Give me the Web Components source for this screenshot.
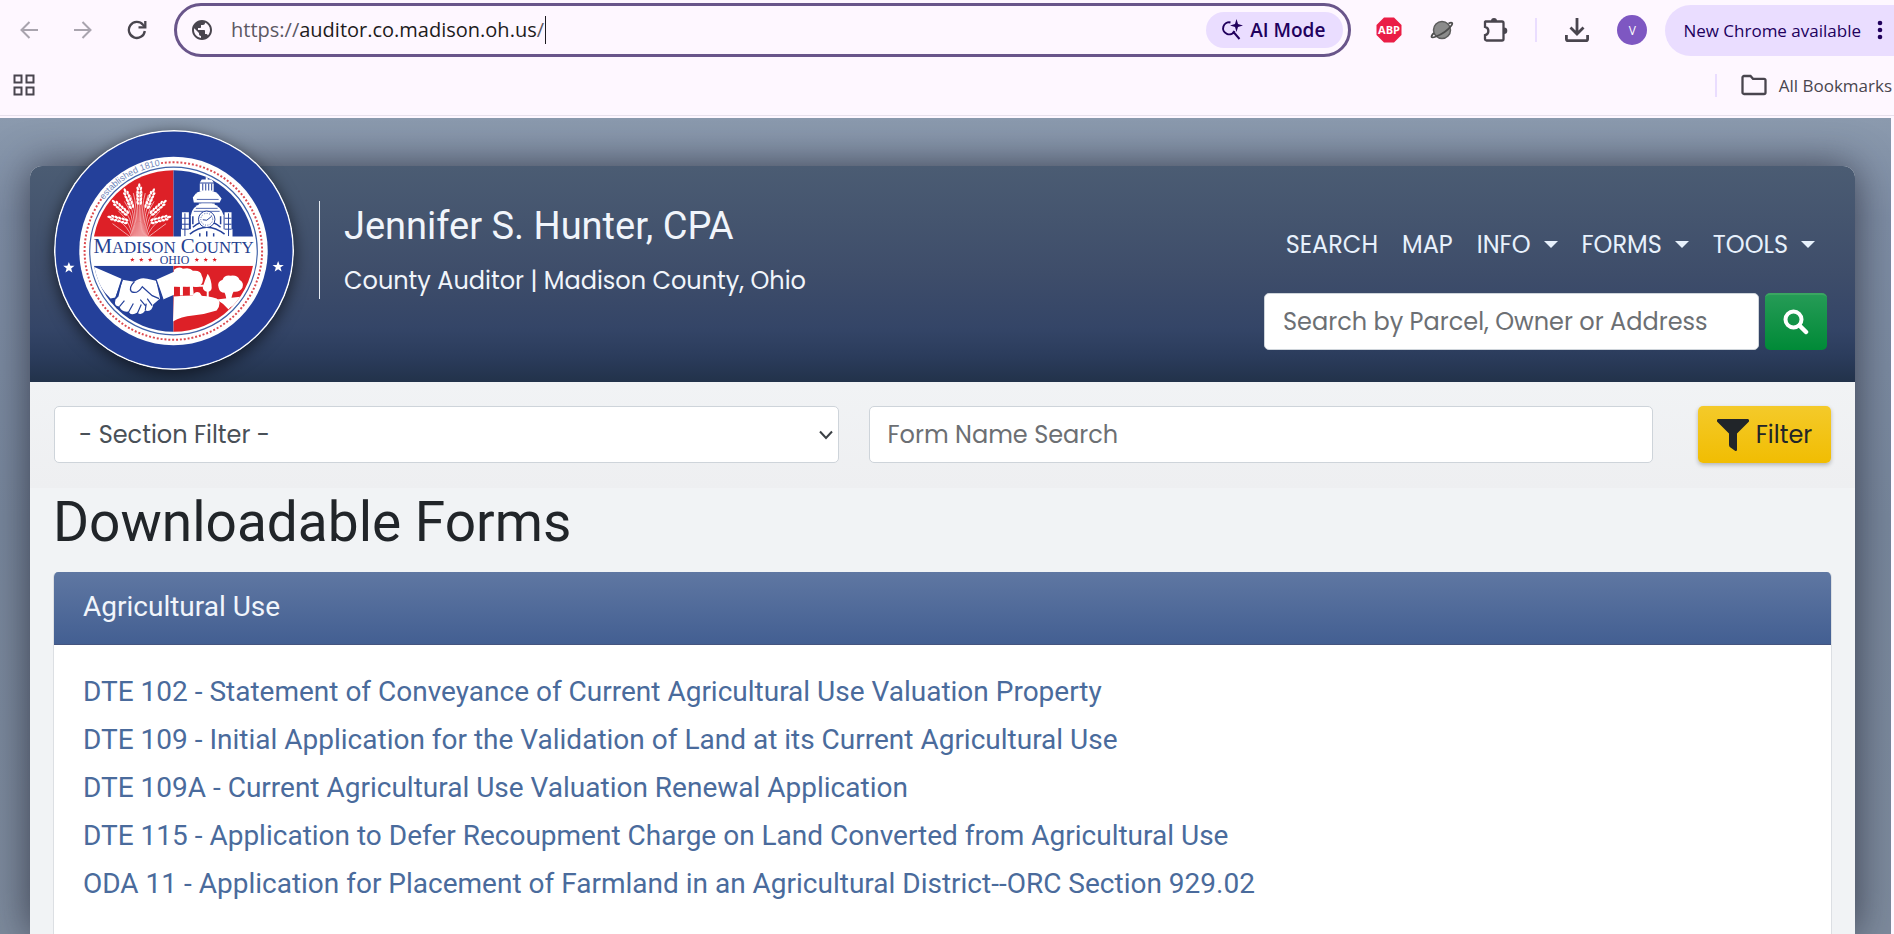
<!DOCTYPE html>
<html lang="en">
<head>
<meta charset="utf-8">
<title>Madison County Auditor - Downloadable Forms</title>
<style>
html, body{
    margin:0;
    height:100%;
}
body{
    display:flex;
    flex-direction:column;
    overflow:hidden;
    background:#fef7ff;
    font-family:Roboto, sans-serif;
    color:#212529;
    --ui:"Segoe UI", "Open Sans", sans-serif;
    --body:Poppins, Inter, sans-serif;
}
</style>
</head>
<body>
<browser-toolbar url="auditor.co.madison.oh.us"></browser-toolbar>
<bookmarks-bar></bookmarks-bar>
<site-shell>
  <site-header slot="header">
    <county-seal slot="seal"></county-seal>
    <span slot="name">Jennifer S. Hunter, CPA</span>
    <span slot="role">County Auditor | Madison County, Ohio</span>
    <nav-menu slot="nav"></nav-menu>
    <parcel-search slot="search"></parcel-search>
  </site-header>
  <filter-bar></filter-bar>
  <form-list>
    <span slot="title">Downloadable Forms</span>
    <form-section>
      <span slot="title">Agricultural Use</span>
      <a href="#dte-102">DTE 102 - Statement of Conveyance of Current Agricultural Use Valuation Property</a>
      <a href="#dte-109">DTE 109 - Initial Application for the Validation of Land at its Current Agricultural Use</a>
      <a href="#dte-109a">DTE 109A - Current Agricultural Use Valuation Renewal Application</a>
      <a href="#dte-115">DTE 115 - Application to Defer Recoupment Charge on Land Converted from Agricultural Use</a>
      <a href="#oda-11">ODA 11 - Application for Placement of Farmland in an Agricultural District--ORC Section 929.02</a>
    </form-section>
  </form-list>
</site-shell>

<script>
// attaches an open shadow root filled from an html string
class BaseElement extends HTMLElement {
    constructor() {
        super();
        const template = document.createElement('template');
        template.innerHTML = this.constructor.html;
        this.attachShadow({ mode: 'open' });
        this.shadowRoot.appendChild(template.content.cloneNode(true));
    }
}

class BrowserToolbar extends BaseElement {
    static html = `
<style>
:host{
    display:flex;
    align-items:center;
    flex:none;
    height:54px;
    padding:3px 0 0 14px;
    font-family:var(--ui);
    font-size:18px;
    color:#1d1b20;
    overflow:hidden;
}
button{
    display:flex;
    align-items:center;
    justify-content:center;
    flex:none;
    border:0;
    padding:0;
    background:none;
    font:inherit;
    color:#49454e;
    cursor:pointer;
}
svg{
    display:block;
    flex:none;
}
.nav{
    display:flex;
    gap:24px;
    margin-right:22px;
}
.nav button{
    width:30px;
    height:30px;
}
.nav button:disabled{
    color:#a9a4ae;
}
.omnibox{
    box-sizing:border-box;
    display:flex;
    align-items:center;
    flex:1;
    height:54px;
    padding:0 5px 0 15px;
    border:3px solid #69558a;
    border-radius:27px;
}
.url{
    flex:1;
    margin-left:19px;
    font-size:20px;
    line-height:28px;
    display:flex;
}
.url span{
    color:#5c5863;
}
.url b{
    font-weight:400;
}
.url i{
    width:1px;
    height:28px;
    margin-left:1px;
    background:#1d1b20;
}
.ai{
    gap:7px;
    height:36px;
    padding:0 18px 0 15px;
    border-radius:18px;
    background:#eaddff;
    color:#21005d;
    font-size:19px;
    font-weight:600;
}
.actions{
    display:flex;
    align-items:center;
    margin-left:25px;
}
.actions > *{
    margin-right:27px;
}
.actions hr{
    width:2px;
    height:24px;
    margin-top:0;
    margin-bottom:0;
    border:0;
    background:#eaddff;
}
.actions .avatar{
    width:30px;
    height:30px;
    margin-right:18px;
    border-radius:50%;
    background:#7e57c2;
    color:#fff;
    font-size:12px;
}
.actions .update{
    height:51px;
    gap:16px;
    margin-right:-24px;
    padding:0 35px 0 18px;
    border-radius:26px;
    background:#eaddff;
    color:#21005d;
    font-size:17px;
}
</style>
<div class="nav">
  <button disabled aria-label="Back"><svg width="20" height="20" viewBox="0 0 20 20" fill="none" stroke="currentColor" stroke-width="2"><path d="M19 10H3M10.500 2L2.500 10L10.500 18"/></svg></button>
  <button disabled aria-label="Forward"><svg width="20" height="20" viewBox="0 0 20 20" fill="none" stroke="currentColor" stroke-width="2"><path d="M1 10H17M9.500 2L17.500 10L9.500 18"/></svg></button>
  <button aria-label="Reload"><svg width="20" height="20" viewBox="0 0 20 20" fill="none" stroke="currentColor" stroke-width="2.300"><path d="M17.800 11A8 8 0 1 1 16 4.800L18 7"/><path d="M18.300 1V7.300H11.500"/></svg></button>
</div>
<div class="omnibox">
  <svg width="20" height="20" viewBox="2 2 20 20" fill="#49454e"><path d="M12 2C6.480 2 2 6.480 2 12s4.480 10 10 10 10-4.480 10-10S17.520 2 12 2zm-1 17.930c-3.950-.49-7-3.850-7-7.930 0-.62.080-1.210.21-1.790L9 15v1c0 1.100.9 2 2 2v1.930zm6.900-2.540c-.26-.81-1-1.390-1.900-1.390h-1v-3c0-.55-.45-1-1-1H8v-2h2c.55 0 1-.45 1-1V7h2c1.100 0 2-.9 2-2v-.41c2.930 1.190 5 4.060 5 7.410 0 2.080-.8 3.970-2.100 5.390z"/></svg>
  <div class="url"><span>https://</span><b></b><span>/</span><i></i></div>
  <button class="ai"><svg width="22" height="22" viewBox="0 0 22 22" fill="none" stroke="#21005d" stroke-width="2"><path d="M9.500 3.500A6 6 0 1 0 13.500 12M12.500 13L18.500 20"/><path d="M15.500 0L17 5L22 6.500L17 8L15.500 13L14 8L9 6.500L14 5Z" fill="#21005d" stroke="none"/></svg>AI Mode</button>
</div>
<div class="actions">
  <button aria-label="Adblock Plus"><svg width="26" height="26" viewBox="0 0 26 26"><path d="M8 0.500H18L25.500 8V18L18 25.500H8L0.500 18V8Z" fill="#ea1e46"/><text x="13" y="17" text-anchor="middle" font-family="Open Sans, sans-serif" font-size="11" font-weight="700" fill="#fff">ABP</text></svg></button>
  <button aria-label="Planet extension"><svg width="26" height="24" viewBox="0 0 26 24"><circle cx="13" cy="12" r="8.500" fill="#8b8b8b" stroke="#5c5c5c" stroke-width="1.500"/><path d="M5 15C1 19 2 20.500 7 18.500C12 16.500 19 12 22 8C24.500 5 23 3.800 19.500 5.500" fill="none" stroke="#4c4c4c" stroke-width="1.800"/></svg></button>
  <button aria-label="Extensions"><svg width="26" height="26" viewBox="0 0 26 26"><path d="M3.500 4.500H20a1.500 1.500 0 0 1 1.500 1.500V22a1.500 1.500 0 0 1-1.500 1.500H4.500A1.500 1.500 0 0 1 3 22V18.200A4.300 4.300 0 0 0 3 9.800V5Z" fill="none" stroke="#49454e" stroke-width="2.300"/><path d="M9 4a3 3 0 0 1 6 0ZM22 10.500a3.300 3.300 0 0 1 0 6.600Z" fill="#49454e"/></svg></button>
  <hr>
  <button aria-label="Downloads"><svg width="26" height="26" viewBox="0 0 26 26" fill="none" stroke="#49454e" stroke-width="2.800"><path d="M13 1V16M6.500 10.500L13 17L19.500 10.500M2.400 18V22a1.700 1.700 0 0 0 1.700 1.700H21.900A1.700 1.700 0 0 0 23.600 22V18"/></svg></button>
  <button class="avatar" aria-label="Profile">V</button>
  <button class="update">New Chrome available<svg width="6" height="20" viewBox="0 0 6 20" fill="#21005d"><circle cx="3" cy="3" r="2.300"/><circle cx="3" cy="10" r="2.300"/><circle cx="3" cy="17" r="2.300"/></svg></button>
</div>
`;
    connectedCallback() {
        this.shadowRoot.querySelector('b').textContent = this.getAttribute('url');
    }
}
customElements.define('browser-toolbar', BrowserToolbar);

class BookmarksBar extends BaseElement {
    static html = `
<style>
:host{
    display:flex;
    align-items:center;
    justify-content:space-between;
    flex:none;
    height:56px;
    padding:0 2px 2px 13px;
    border-bottom:1px solid #e7e0ec;
    font-family:var(--ui);
    font-size:17px;
    color:#49454e;
}
button{
    display:flex;
    align-items:center;
    gap:12px;
    border:0;
    padding:0;
    background:none;
    font:inherit;
    color:inherit;
}
.all{
    padding:0 0 0 24px;
    border-left:2px solid #eaddff;
}
</style>
<button aria-label="Apps"><svg width="22" height="22" viewBox="0 0 22 22" fill="none" stroke="#49454e" stroke-width="2"><path d="M1.500 1.500h7v7h-7zM13.500 1.500h7v7h-7zM1.500 13.500h7v7h-7zM13.500 13.500h7v7h-7z"/></svg></button>
<button class="all"><svg width="26" height="22" viewBox="0 0 26 22" fill="none" stroke="#49454e" stroke-width="2.300"><path d="M3 2H9.500L12 4.800H23A1.500 1.500 0 0 1 24.500 6.300V18.500A1.500 1.500 0 0 1 23 20H3A1.500 1.500 0 0 1 1.500 18.500V3.500A1.500 1.500 0 0 1 3 2Z"/></svg>All Bookmarks</button>
`;
}
customElements.define('bookmarks-bar', BookmarksBar);

class SiteShell extends BaseElement {
    static html = `
<style>
:host{
    display:block;
    flex:1;
    margin:2px 3px 0 0;
    padding:48px 36px 0 30px;
    background:linear-gradient(#8b9aae 0, #7d8ca3 100px, #77869b 400px, #7d8a9c 100%);
    overflow:hidden;
}
.page{
    display:flex;
    flex-direction:column;
    height:100%;
    border-radius:12px 12px 0 0;
    background:#f1f3f5;
    box-shadow:0 0 40px rgba(30,32,45,.7);
}
</style>
<div class="page">
  <slot name="header"></slot>
  <slot></slot>
</div>
`;
}
customElements.define('site-shell', SiteShell);

class SiteHeader extends BaseElement {
    static html = `
<style>
:host{
    display:flex;
    align-items:center;
    flex:none;
    height:216px;
    padding:0 28px 0 24px;
    border-radius:12px 12px 0 0;
    background:linear-gradient(#4b5c73 0, #3e4d6a 50%, #344567 75%, #2b3c5c 88%, #22324a 100%);
    color:#f1f5fb;
}
.seal{
    align-self:flex-start;
    margin-top:-36px;
}
.titles{
    margin:-48px 0 0 25px;
    padding:3px 0 0 24px;
    border-left:1px solid #e6ebf2;
    height:95px;
}
h2{
    margin:0 0 13px;
    font-weight:400;
    font-size:38px;
    line-height:44px;
}
p{
    margin:0;
    font-family:var(--body);
    font-size:24px;
    line-height:40px;
}
.side{
    display:flex;
    flex-direction:column;
    gap:30px;
    width:563px;
    margin:28px 0 0 auto;
}
</style>
<div class="seal"><slot name="seal"></slot></div>
<div class="titles">
  <h2><slot name="name"></slot></h2>
  <p><slot name="role"></slot></p>
</div>
<div class="side">
  <slot name="nav"></slot>
  <slot name="search"></slot>
</div>
`;
}
customElements.define('site-header', SiteHeader);

class CountySeal extends BaseElement {
    static html = `
<style>
:host{
    display:block;
}
svg{
    display:block;
    border-radius:50%;
    box-shadow:0 4px 16px rgba(0,0,0,.6);
}
</style>
<svg width="240" height="240" viewBox="0 0 242 242" role="img" aria-label="Madison County, Ohio seal">
  <defs>
    <clipPath id="inner"><circle cx="120.500" cy="122" r="81.500"/></clipPath>
    <path id="arc" d="M48.500 73A87 87 0 0 1 120.500 35"/>
    <path id="star" d="M0 -6L1.500 -2H5.700L2.300 .6L3.500 4.800L0 2.300L-3.500 4.800L-2.300 .6L-5.700 -2H-1.500Z"/>
  </defs>
  <circle cx="121" cy="121" r="121" fill="#fff"/>
  <circle cx="121" cy="121" r="119.500" fill="#24409a"/>
  <circle cx="120.500" cy="122" r="95" fill="#fff"/>
  <path d="M108 33.400A89.500 89.500 0 1 1 49 68" fill="none" stroke="#dc4a50" stroke-width="2" stroke-dasharray="2 1.900"/>
  <circle cx="120.500" cy="122" r="84.500" fill="none" stroke="#3f62a8" stroke-width="1.200"/>
  <text font-family="Liberation Sans, sans-serif" font-size="9" fill="#7287ba"><textPath href="#arc" startOffset="3">established 1810</textPath></text>
  <g clip-path="url(#inner)">
    <path d="M30 30H120.500V108H30Z" fill="#dd2027"/>
    <path d="M120.500 30H210V108H120.500Z" fill="#24409a"/>
    <path d="M30 137H120.500V210H30Z" fill="#24409a"/>
    <path d="M120.500 137H210V210H120.500Z" fill="#dd2027"/>
    <g id="wheat" fill="#fff" stroke="#fff"></g>
    <g fill="#fff">
      <path d="M153 46h2v4h-2zM149 50h10l2 3h-14zM147 54h14v8h-14z"/>
      <path d="M144 63q10-4 20 0l1 4h-22zM140 68l3-4h22l4 5-2 4h-26z"/>
      <path d="M146 74h16v4h-16z"/>
      <path d="M138 86q1-9 11-12h10q10 3 12 12v21h-33z"/>
      <path d="M129 83h7v24h-7zM172 83h7v24h-7z"/>
      <path d="M128 100h52v8h-52z"/>
      <g fill="none" stroke="#24409a">
        <path d="M150 54v7M153 54v7M156 54v7M159 54v7" stroke-width="1"/>
        <path d="M144 70h22M143 79h22M141 82h26" stroke-width=".8"/>
        <path d="M140 98q14-12 28 0M137 105q17-14 35 0" stroke-width="1.500"/>
        <path d="M129 89h7M129 95h7M129 100h7M172 89h7M172 95h7M172 100h7M132 84v23M176 84v23" stroke-width="1"/>
        <path d="M140 87v8M168 87v8M147 104v4M154 102v6M161 104v4" stroke-width="1.500"/>
      </g>
      <circle cx="154" cy="90" r="8.300" stroke="#24409a" stroke-width="1"/>
      <circle cx="154" cy="90" r="6" fill="none" stroke="#24409a" stroke-width=".8" stroke-dasharray="1 1.500"/>
      <path d="M150 90.500L154 91L159 87" fill="none" stroke="#24409a"/>
    </g>
    <g fill="#fff">
      <path d="M38 137L68 150L62 169L57 170Q45 158 38 140Z"/>
      <path d="M69 151L81 153Q87 148 94 150L103 152L107 170L100 176Q99 184 92 182Q88 188 84 184Q78 188 75 183Q68 184 66 178Q60 178 62 171L65 168Z"/>
      <path d="M103 151L121 143V166L110 171Z"/>
      <g fill="none" stroke="#24409a" stroke-width="1.200">
        <path d="M69 151L62 170M103 151L110 171M81 153Q75 159 78 163Q84 166 89 158L99 167L106 170"/>
        <path d="M66 178L71 172M75 184L80 175M84 185L88 176M92 182L93 175M94 170L99 177M87 171L93 178"/>
      </g>
    </g>
    <g fill="#fff">
      <path d="M121 141q5-4 9-1q7-2 10 2q8-1 9 5q3 5-1 9q-4 4-8 1l1 10h-4v-10q-4 2-7-1v11h-3v-9l-6-1z"/>
      <path d="M155 145q4 6 4 14q0 3-3 4v6h-2v-6q-4-1-4-5q2-6 5-13z"/>
      <path d="M166 159q-2-6 4-8q2-5 8-4q7-1 9 4q5 3 3 8q-3 5-9 4q-2 3-3 13h-4q0-8-2-12q-5 0-6-5z"/>
      <path d="M121 168q30-3 43 2q6 4 0 12q-12 4-24 5q-12 1-20 6z"/>
      <path d="M140 167q2-5 7-3l3 5h-10zM164 171l26-3v6q-12 3-14 7q-5-6-12-10z"/>
      <path d="M148 205q0-8 12-10q14-3 20-12l10 5l-20 25z"/>
      <path d="M121 157h30M174 171l4 4 6-5" fill="none" stroke="#fff" stroke-width="2"/>
    </g>
    <path d="M30 107.500H212V137H30Z" fill="#fff"/>
  </g>
  <text x="120.500" y="124" font-family="Liberation Serif, serif" font-size="21" fill="#26418f" text-anchor="middle">M<tspan font-size="17">ADISON</tspan> C<tspan font-size="17">OUNTY</tspan><tspan x="121.500" y="135" font-size="12">OHIO</tspan></text>
  <g id="stars"></g>
</svg>
`;
    connectedCallback() {
        // wheat: thin stems fanning out from the bottom, then the ears
        let wheat = '';
        for (let k = -9; k <= 9; k++) {
            const top = 62 + k * k * 0.4;
            wheat += `<path d="M${86 + k} 108Q${86 + k * 1.2} ${top + 12} ${86 + k * 3} ${top}" fill="none" stroke-width=".6"/>`;
        }
        const ears = [[86, 57, 0], [72, 62, -22], [100, 62, 22], [61, 73, -48], [111, 73, 48], [57, 88, -75], [115, 88, 75]];
        ears.forEach(([x, y, angle]) => {
            wheat += `<g transform="translate(${x} ${y}) rotate(${angle})" stroke="none"><ellipse cy="-1" rx="1.200" ry="2.400"/>`;
            for (let k = 0; k < 5; k++) {
                wheat += `<ellipse cx="-1.600" cy="${2 + k * 3.6}" rx="1.200" ry="2" transform="rotate(-20 -1.600 ${2 + k * 3.6})"/>`;
                wheat += `<ellipse cx="1.600" cy="${2 + k * 3.6}" rx="1.200" ry="2" transform="rotate(20 1.600 ${2 + k * 3.6})"/>`;
            }
            wheat += '</g>';
        });
        this.shadowRoot.querySelector('#wheat').innerHTML = wheat;

        let stars = '<use href="#star" x="15" y="139" fill="#fff"/><use href="#star" x="226" y="138" fill="#fff"/>';
        [79, 88, 97, 144, 153, 162].forEach(x => {
            stars += `<use href="#star" transform="translate(${x} 131) scale(.4)" fill="#dd2027"/>`;
        });
        this.shadowRoot.querySelector('#stars').innerHTML = stars;
    }
}
customElements.define('county-seal', CountySeal);

class NavMenu extends BaseElement {
    static html = `
<style>
:host{
    display:block;
}
nav{
    display:flex;
    justify-content:flex-end;
    gap:24px;
    padding-right:12px;
    font-family:var(--body);
    font-size:24px;
    line-height:36px;
}
a, button{
    display:flex;
    align-items:center;
    gap:13px;
    border:0;
    padding:0;
    background:none;
    font:inherit;
    color:#e8f1fc;
    text-decoration:none;
    cursor:pointer;
}
button::after{
    content:"";
    border:7px solid transparent;
    border-top-color:currentColor;
    border-bottom:0;
}
</style>
<nav>
  <a href="#search">SEARCH</a>
  <a href="#map">MAP</a>
  <button>INFO</button>
  <button>FORMS</button>
  <button>TOOLS</button>
</nav>
`;
}
customElements.define('nav-menu', NavMenu);

class ParcelSearch extends BaseElement {
    static html = `
<style>
:host{
    display:block;
}
form{
    display:flex;
    gap:6px;
}
input{
    box-sizing:border-box;
    flex:1;
    min-width:0;
    height:57px;
    padding:0 18px;
    border:1px solid #ced4da;
    border-radius:5px;
    background:#fff;
    font-family:var(--body);
    font-size:24px;
    color:#495057;
}
input::placeholder{
    color:#6c6f73;
}
button{
    display:flex;
    align-items:center;
    justify-content:center;
    width:62px;
    height:57px;
    border:0;
    border-top:2px solid #3aa661;
    border-radius:5px;
    background:linear-gradient(#259b56, #008a37);
}
</style>
<form>
  <input type="text" placeholder="Search by Parcel, Owner or Address" aria-label="Search by Parcel, Owner or Address">
  <button type="button" aria-label="Search"><svg width="26" height="26" viewBox="0 0 26 26" fill="none" stroke="#fff"><circle cx="10.500" cy="10.500" r="8" stroke-width="4"/><path d="M16.500 16.500L23 23" stroke-width="4.500" stroke-linecap="round"/></svg></button>
</form>
`;
}
customElements.define('parcel-search', ParcelSearch);

class FilterBar extends BaseElement {
    static html = `
<style>
:host{
    display:block;
    flex:none;
}
form{
    display:grid;
    grid-template-columns:1fr 1fr 148px;
    column-gap:30px;
    padding:24px 24px 25px;
    background:linear-gradient(#f1f3f5, #eeeff1);
}
.select{
    position:relative;
}
.select svg{
    position:absolute;
    top:24px;
    right:6px;
    pointer-events:none;
}
select, input{
    box-sizing:border-box;
    width:100%;
    height:57px;
    padding:0 18px;
    border:1px solid #ced4da;
    border-radius:5px;
    background:#fff;
    font-family:var(--body);
    font-size:24px;
    color:#495057;
}
select{
    appearance:none;
    padding:0 24px;
}
input::placeholder{
    color:#6c6f73;
}
button{
    display:flex;
    align-items:center;
    justify-content:center;
    gap:7px;
    justify-self:end;
    width:133px;
    height:57px;
    border:0;
    border-radius:5px;
    background:linear-gradient(#f4ca2a, #f1bd02);
    box-shadow:0 2px 4px rgba(0,0,0,.25);
    font-family:var(--body);
    font-size:24px;
    color:#212529;
}
</style>
<form>
  <div class="select">
    <select aria-label="Section Filter"><option>- Section Filter -</option><option>Agricultural Use</option></select>
    <svg width="14" height="10" viewBox="0 0 14 10" fill="none" stroke="#3b4045" stroke-width="2"><path d="M1 1.500L7 8L13 1.500"/></svg>
  </div>
  <input type="text" placeholder="Form Name Search" aria-label="Form Name Search">
  <button type="button"><svg width="32" height="32" viewBox="0 0 32 32" fill="#212529"><path d="M1 0H31Q33 1 31.500 3L20 14.500V31Q19.500 32.500 18 31.800L13.500 28.500Q12 27.500 12 26V14.500L.5 3Q-1 1 1 0Z"/></svg>Filter</button>
</form>
`;
}
customElements.define('filter-bar', FilterBar);

class FormList extends BaseElement {
    static html = `
<style>
:host{
    display:flex;
    flex-direction:column;
    flex:1;
    padding:0 23px;
}
h1{
    margin:0 0 16px;
    font-weight:400;
    font-size:55px;
    line-height:68px;
}
</style>
<h1><slot name="title"></slot></h1>
<slot></slot>
`;
}
customElements.define('form-list', FormList);

class FormSection extends BaseElement {
    static html = `
<style>
:host{
    display:block;
    flex:1;
    border:solid #dcdfe3;
    border-width:0 1px;
    border-radius:5px 5px 0 0;
    background:#fff;
    overflow:hidden;
}
h2{
    margin:0;
    padding:17px 29px 19px;
    border-bottom:1px solid #45557f;
    background:linear-gradient(#5f77a2, #435f92);
    font-weight:400;
    font-size:28px;
    line-height:36px;
    color:#f1f5fb;
}
.links{
    display:flex;
    flex-direction:column;
    align-items:flex-start;
    padding:23px 29px;
}
::slotted(a){
    font-size:28px;
    line-height:48px;
    color:#4a6b9c;
    text-decoration:none;
}
</style>
<h2><slot name="title"></slot></h2>
<div class="links"><slot></slot></div>
`;
}
customElements.define('form-section', FormSection);
</script>
</body>
</html>
